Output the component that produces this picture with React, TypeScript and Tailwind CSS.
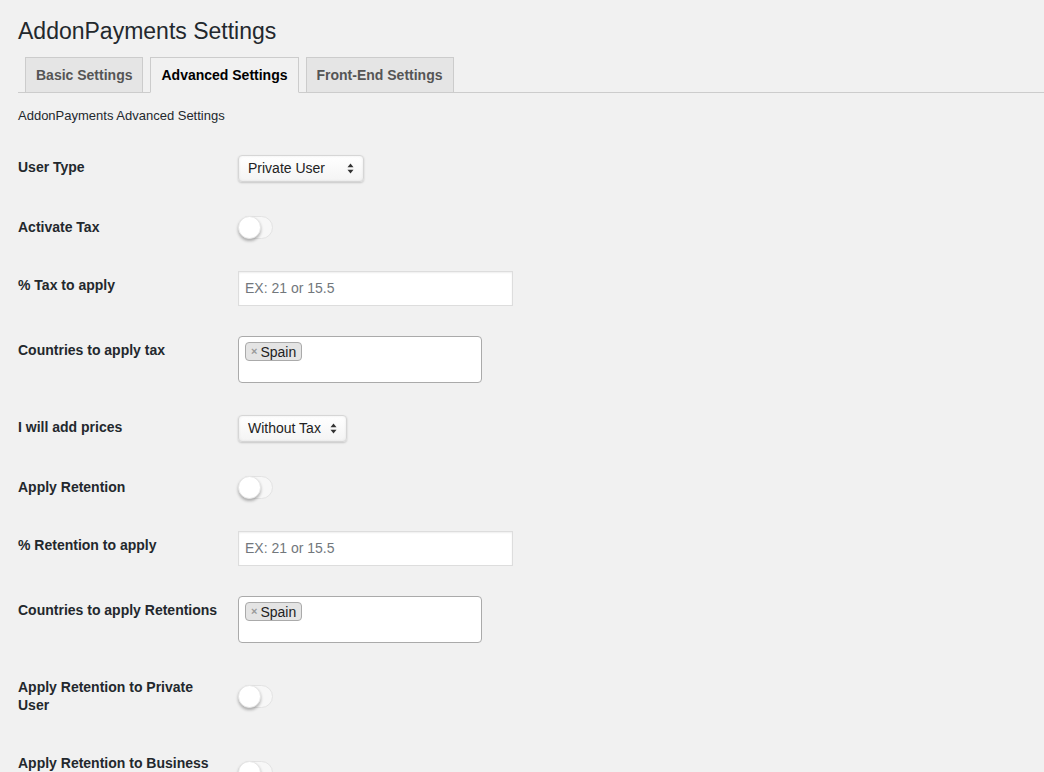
import type { ReactNode } from 'react';

const font = { fontFamily: '"Liberation Sans", Arial, sans-serif' };

function Select({ value, width }: { value: string; width: string }) {
  return (
    <div className="h-[30px] flex items-center">
      <div
        className={`${width} h-[27px] flex items-center justify-between pl-[9px] pr-[9px] rounded-[4px] border border-[#d6d6d6] bg-gradient-to-b from-[#ffffff] to-[#f4f4f4] shadow-[0_1px_2px_rgba(0,0,0,0.18),inset_0_0_3px_rgba(0,0,0,0.08)] text-[14px] text-[#222]`}
      >
        <span>{value}</span>
        <svg width="7" height="11" viewBox="0 0 7 11" className="ml-2">
          <path d="M3.5 0.5 L6.5 4.2 L0.5 4.2 Z" fill="#333" />
          <path d="M3.5 10.5 L6.5 6.8 L0.5 6.8 Z" fill="#333" />
        </svg>
      </div>
    </div>
  );
}

function Toggle() {
  return (
    <div className="relative w-[35px] h-[23px] rounded-full bg-[#f7f7f7] border border-[#e3e3e3]">
      <div className="absolute left-[-1px] top-[-1px] w-[23px] h-[23px] rounded-full bg-white border border-[#e6e6e6] shadow-[0_2px_3px_rgba(0,0,0,0.28)]" />
    </div>
  );
}

function TextInput() {
  return (
    <div className="w-[275px] h-[35px] flex items-center px-[6px] bg-white border border-[#dddddd] shadow-[inset_0_1px_2px_rgba(0,0,0,0.07)] text-[14px] text-[#72777c]">
      EX: 21 or 15.5
    </div>
  );
}

function MultiSelect() {
  return (
    <div className="w-[244px] h-[47px] flex items-start bg-white border border-[#aaaaaa] rounded-[4px] px-[6px] pt-[5px]">
      <span className="flex items-center h-[19px] px-[5px] bg-[#e4e4e4] border border-[#aaaaaa] rounded-[4px] text-[14px] text-[#222] leading-none">
        <span className="text-[#999] font-bold text-[11px] mr-[3px]">×</span>
        Spain
      </span>
    </div>
  );
}

function Row({ label, children }: { label: ReactNode; children: ReactNode }) {
  return (
    <div className="flex">
      <div className="w-[220px] pr-[20px] py-[20px] text-[14px] leading-[18px] font-bold text-[#23282d]">
        {label}
      </div>
      <div className="flex items-center py-[15px]">{children}</div>
    </div>
  );
}

export default function App() {
  const tabs = ['Basic Settings', 'Advanced Settings', 'Front-End Settings'];
  return (
    <div className="min-h-screen bg-[#f1f1f1] text-[#23282d]" style={font}>
      <div className="pt-[17px]">
        <h1 className="pl-[18px] text-[23px] leading-[29px] font-normal text-[#23282d]">
          AddonPayments Settings
        </h1>
        <div className="mt-[11px] ml-[18px] flex border-b border-[#cccccc] pl-[7px] gap-[7px]">
          {tabs.map((t, i) => (
            <div
              key={t}
              className={`h-[36px] -mb-px flex items-center px-[10px] border border-[#cccccc] text-[14px] font-bold ${
                i === 1
                  ? 'bg-[#f1f1f1] border-b-[#f1f1f1] text-[#000]'
                  : 'bg-[#e5e5e5] text-[#555]'
              }`}
            >
              {t}
            </div>
          ))}
        </div>
        <p className="pl-[18px] mt-[14px] text-[13px] leading-[18px] text-[#23282d]">
          AddonPayments Advanced Settings
        </p>
        <div className="pl-[18px] mt-[13px]">
          <Row label="User Type">
            <Select value="Private User" width="w-[126px]" />
          </Row>
          <Row label="Activate Tax">
            <Toggle />
          </Row>
          <Row label="% Tax to apply">
            <TextInput />
          </Row>
          <Row label="Countries to apply tax">
            <MultiSelect />
          </Row>
          <Row label="I will add prices">
            <Select value="Without Tax" width="w-[109px]" />
          </Row>
          <Row label="Apply Retention">
            <Toggle />
          </Row>
          <Row label="% Retention to apply">
            <TextInput />
          </Row>
          <Row label="Countries to apply Retentions">
            <MultiSelect />
          </Row>
          <Row label="Apply Retention to Private User">
            <Toggle />
          </Row>
          <Row label="Apply Retention to Business User">
            <Toggle />
          </Row>
        </div>
      </div>
    </div>
  );
}
